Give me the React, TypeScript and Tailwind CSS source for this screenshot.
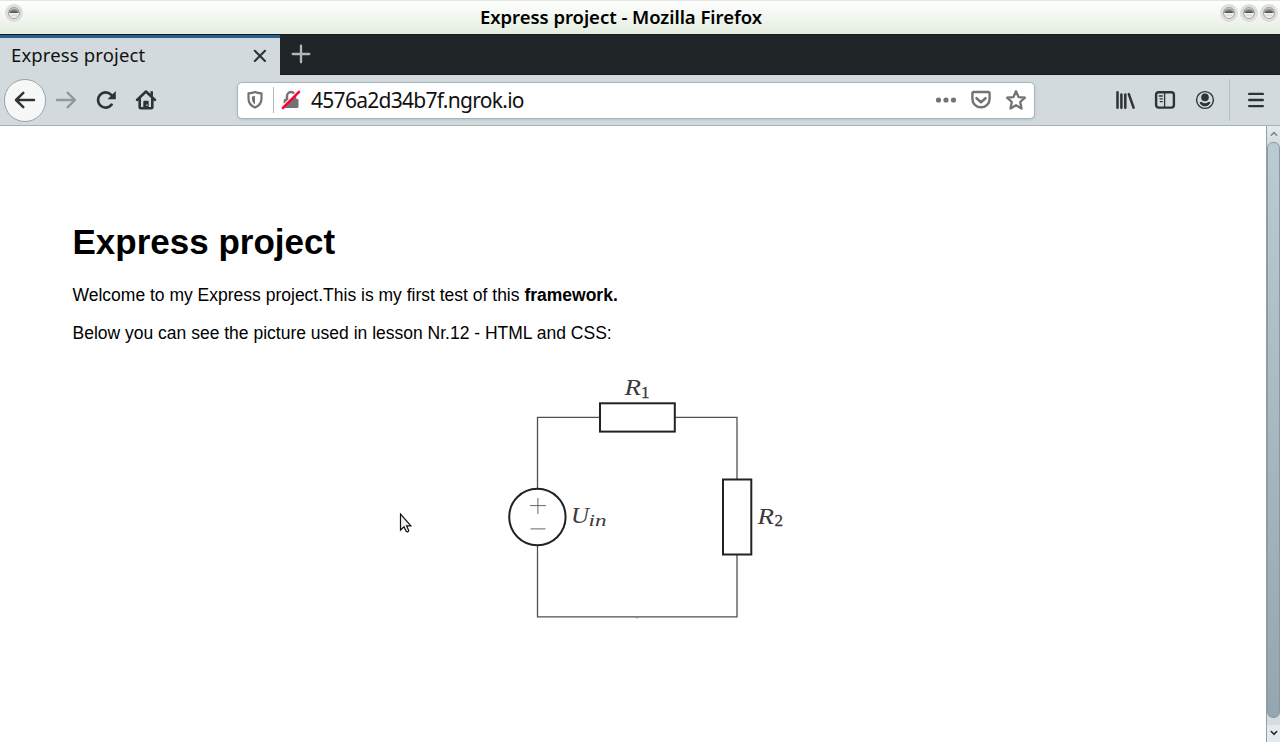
import type { ReactNode } from "react";

type IconProps = { box: string; className: string; children: ReactNode };

function Icon({ box, className, children }: IconProps) {
  return (
    <svg viewBox={box} className={`block shrink-0 ${className}`} fill="none" stroke="currentColor" strokeLinecap="round" strokeLinejoin="round">
      {children}
    </svg>
  );
}

function WindowButton() {
  return (
    <span className="flex h-[18px] w-[18px] items-center justify-center rounded-full bg-[#dcdedb]">
      <span className="flex h-3 w-3 items-center rounded-full border border-[#a2a2a2] bg-[linear-gradient(#c4c4c4_0%,#8a8a8a_20%,#555_45%,#efefef_55%,#dcdcdc_75%,#fff_100%)] shadow-[inset_1px_0_1px_#ffffff80,inset_-1px_0_1px_#ffffff80]" />
    </span>
  );
}

function TitleBar() {
  return (
    <div className="flex h-[34px] shrink-0 items-start justify-between border-t border-[#dfebda] bg-linear-to-b from-white to-[#e4eddf] pr-[2px] pl-[5px]">
      <div className="flex w-[54px] pt-[3px]">
        <WindowButton />
      </div>
      <h1 className="mr-[37px] flex h-[31px] items-center font-['Noto_Sans'] text-[18.5px] font-semibold whitespace-nowrap text-black">
        <span className="tracking-[-0.04px]">Express project - Mozilla Firefox</span>
      </h1>
      <div className="flex gap-[2px] pt-[3px]">
        <WindowButton />
        <WindowButton />
        <WindowButton />
      </div>
    </div>
  );
}

function TabStrip() {
  return (
    <div className="flex h-[41px] shrink-0 border-y border-[#16191b] bg-[#202527]">
      <div className="-mb-px flex w-[280px] items-center justify-between border-t-[3px] border-[#2c6089] bg-[#d2dadd] pr-3 pb-[2px] pl-[11px]">
        <span className="pb-[2px] font-['Noto_Sans'] text-[18.5px] tracking-[0.14px] whitespace-nowrap text-[#111]">Express project</span>
        <Icon box="0 0 16 16" className="h-4 w-4 text-[#2e3436]">
          <path d="M2.8 2.8 13 13M13 2.8 2.8 13" strokeWidth="2.1" />
        </Icon>
      </div>
      <div className="ml-[11px] flex items-center pb-px">
        <Icon box="0 0 20 20" className="h-5 w-5 text-[#b4b7b8]">
          <path d="M10 1.7v16.6M1.7 10h16.6" strokeWidth="2.3" />
        </Icon>
      </div>
    </div>
  );
}

function AddressBar() {
  return (
    <div className="flex h-[37px] w-[798px] items-center rounded-[5px] border border-[#a5b5bd] bg-white text-[#737373] shadow-[0_1px_3px_#0000001c]">
      <Icon box="0 0 18 20" className="ml-2 h-5 w-[18px]">
        <path d="M9 2.1c2 .9 4 1.2 6.5 1.3v5.2c0 4.3-2.2 7.3-6.5 9-4.3-1.7-6.5-4.7-6.5-9V3.4C5 3.3 7 3 9 2.1Z" strokeWidth="2.2" />
        <path d="M9 5.7c-1 .4-2 .6-3.1.7v2.2c0 2.6 1 4.6 3.1 5.8Z" fill="currentColor" stroke="none" />
      </Icon>
      <span className="ml-[9px] h-[26px] w-px bg-[#b3b9bd]" />
      <Icon box="0 0 20 20" className="ml-[7px] h-5 w-5">
        <rect x="2.7" y="8.8" width="14.8" height="9.2" rx="1.5" fill="currentColor" stroke="none" />
        <path d="M6 9V6.1a4 4 0 0 1 8 0V9" strokeWidth="2.5" />
        <path d="M.9 16.7 16.7.9" stroke="#fff" strokeWidth="1.4" />
        <path d="M1.9 18 18 1.9" stroke="#ff0039" strokeWidth="2.5" />
      </Icon>
      <span className="ml-[10px] pt-[2px] font-['Noto_Sans'] text-[21px] tracking-[-0.72px] whitespace-nowrap text-[#111]">4576a2d34b7f.ngrok.io</span>
      <div className="ml-auto flex items-center pr-[7px]">
        <Icon box="0 0 22 20" className="h-5 w-[22px]">
          <g fill="currentColor" stroke="none">
            <circle cx="3.5" cy="10" r="2.6" />
            <circle cx="11" cy="10" r="2.6" />
            <circle cx="18.5" cy="10" r="2.6" />
          </g>
        </Icon>
        <Icon box="0 0 22 20" className="ml-[13px] h-5 w-[22px]">
          <path d="M3.8 2h14.4c.9 0 1.4.5 1.4 1.4v5.3a8.6 8.6 0 0 1-17.2 0V3.4C2.4 2.5 2.9 2 3.8 2Z" strokeWidth="2.4" />
          <path d="m6.5 8.2 4.5 4 4.5-4" strokeWidth="2.5" />
        </Icon>
        <Icon box="0 0 22 22" className="ml-[13px] h-[22px] w-[22px]">
          <path d="m11 2.2 2.6 5.9 6.3.6-4.7 4.3 1.3 6.5-5.5-3.3-5.5 3.3L6.8 13 2.1 8.7l6.3-.6Z" strokeWidth="2.3" />
        </Icon>
      </div>
    </div>
  );
}

function Toolbar() {
  return (
    <div className="flex h-[51px] shrink-0 items-center border-b border-[#a4b1b8] bg-[#d2dadd] text-[#2e3436]">
      <div className="ml-1 flex h-[43px] w-[42px] items-center justify-center rounded-full border border-[#9ba3a6] bg-[#f6f8f8]">
        <Icon box="0 0 22 20" className="h-5 w-[22px]">
          <path d="M20 10H2.5M9.3 2.8 2 10l7.3 7.2" strokeWidth="2.5" />
        </Icon>
      </div>
      <Icon box="0 0 22 20" className="ml-[9px] h-5 w-[22px] text-[#91999c]">
        <path d="M2 10h17.5M12.7 2.8 20 10l-7.3 7.2" strokeWidth="2.4" />
      </Icon>
      <Icon box="0 0 22 20" className="ml-[18px] h-5 w-[22px]">
        <path d="M16.6 14.7A7.6 7.6 0 1 1 16 4.6L18.4 7" strokeWidth="2.7" />
        <path d="M20.8.9v8.300h-8.300Z" fill="currentColor" stroke="none" />
      </Icon>
      <Icon box="0 0 22 22" className="ml-[18px] h-[22px] w-[22px]">
        <path d="M2 11 11 2.5l9 8.5" strokeWidth="2.5" />
        <path d="M4.7 10v8.2c0 .6.4 1 1 1h10.600c.6 0 1-.4 1-1V10" strokeWidth="2.6" />
        <path d="M15.4 2.2h2.600v5.300l-2.600-2Z" fill="currentColor" stroke="none" />
        <path d="M8.3 19v-6.100c0-.7.5-1.200 1.200-1.200h3c.7 0 1.200.5 1.200 1.200V19Z" fill="currentColor" stroke="none" />
        <path d="M12 15.8v.7" stroke="#d2dadd" strokeWidth="1.2" />
      </Icon>
      <div className="ml-20">
        <AddressBar />
      </div>
      <Icon box="0 0 20 20" className="ml-20 h-5 w-5">
        <path d="M2.5 2.2v15.600M6.400 4.600v13.200M10.300 4.600v13.200M13.800 4.100l4.800 13.500" strokeWidth="2.5" />
      </Icon>
      <Icon box="0 0 22 20" className="ml-[19px] h-5 w-[22px]">
        <rect x="2.1" y="2.2" width="17.8" height="15.4" rx="2.6" strokeWidth="2.4" />
        <path d="M10.6 2.5v15" strokeWidth="1.3" />
        <path d="M5.3 6h3M6 8.8h2.300M6.300 11.600h2" strokeWidth="1.3" />
      </Icon>
      <Icon box="0 0 20 20" className="ml-[19px] h-5 w-5">
        <circle cx="10" cy="10" r="8.4" strokeWidth="1.4" />
        <circle cx="10" cy="7.4" r="3.8" fill="currentColor" stroke="none" />
        <path d="M4.6 12.1h2.200c1.800 1.600 4.600 1.600 6.400 0h2.200c-.4 2.600-2.400 4.200-5.400 4.200s-5-1.600-5.400-4.200Z" fill="currentColor" stroke="none" />
      </Icon>
      <span className="ml-[14px] h-[42px] w-px bg-[#b6c0c4]" />
      <Icon box="0 0 20 20" className="ml-4 h-5 w-5">
        <path d="M3.2 3.9h13.600M3.200 10h13.600M3.200 16.100h13.600" strokeWidth="2.4" />
      </Icon>
    </div>
  );
}

function Circuit() {
  return (
    <svg viewBox="490 365 310 265" className="ml-[417.5px] block h-[265px] w-[310px]" fill="none">
      <path d="M537.5 488.5V417.3H599M675 417.3h62V479M737 554.5v62.300H537.500V545" stroke="#505050" strokeWidth="1.3" />
      <rect x="600" y="403.3" width="74.8" height="28.3" stroke="#222" strokeWidth="2" />
      <rect x="723" y="479.5" width="28.3" height="75" stroke="#222" strokeWidth="2" />
      <circle cx="537.4" cy="517" r="28.2" stroke="#222" strokeWidth="2" />
      <path d="M530 505.6h16M537.9 498v16M530.5 528.9h15" stroke="#666" strokeWidth="1" />
      <path d="M636 617.8h2" stroke="#777" strokeWidth=".8" />
      <g fill="#3a3a3a" fontFamily="'Liberation Serif', serif" fontStyle="italic">
        <text x="624.5" y="394.8" fontSize="24" textLength="16.5" lengthAdjust="spacingAndGlyphs">R</text>
        <text x="641" y="397.8" fontSize="17" fontStyle="normal" stroke="#3a3a3a" strokeWidth=".3" textLength="9">1</text>
        <text x="757.5" y="523.5" fontSize="24" textLength="16.5" lengthAdjust="spacingAndGlyphs">R</text>
        <text x="774.5" y="526.3" fontSize="17" fontStyle="normal" stroke="#3a3a3a" strokeWidth=".3" textLength="9">2</text>
        <text x="571" y="523.3" fontSize="24" textLength="18" lengthAdjust="spacingAndGlyphs">U</text>
        <text x="588.5" y="526.3" fontSize="17" textLength="18" lengthAdjust="spacingAndGlyphs">in</text>
      </g>
    </svg>
  );
}

function Scrollbar() {
  return (
    <div className="flex w-[14px] shrink-0 flex-col border-l border-[#8fa0a8] bg-[#d5dde0]">
      <div className="flex h-4 items-center justify-center bg-linear-to-b from-[#e6ecee] to-[#d4dde0] text-[#75858c]">
        <Icon box="0 0 8 6" className="h-[6px] w-2">
          <path d="M1.3 4.3 4 1.5l2.700 2.800" strokeWidth="1.4" />
        </Icon>
      </div>
      <div className="h-[576px] rounded-[6px] border border-[#8799a1] bg-linear-to-b from-[#bccbd1] to-[#95a6af]" />
      <div className="mt-[7px] flex flex-1 items-center justify-center bg-[#e6eaec] pb-px text-[#202527]">
        <Icon box="0 0 8 6" className="h-[6px] w-2">
          <path d="M1.3 1.5 4 4.3l2.700-2.800" strokeWidth="1.6" />
        </Icon>
      </div>
    </div>
  );
}

export default function App() {
  return (
    <div className="relative flex h-[742px] w-[1280px] flex-col overflow-hidden bg-white">
      <TitleBar />
      <TabStrip />
      <Toolbar />
      <div className="flex min-h-0 flex-1">
        <main className="flex-1 pt-24 pl-[72.5px] font-['Liberation_Sans'] text-[17.5px] leading-5 whitespace-nowrap text-black">
          <h2 className="text-[35px] leading-10 font-bold">Express project</h2>
          <p className="mt-[23px]">
            Welcome to my Express project.This is my first test of this <strong>framework.</strong>
          </p>
          <p className="mt-[18px] mb-[22px]">Below you can see the picture used in lesson Nr.12 - HTML and CSS:</p>
          <Circuit />
        </main>
        <Scrollbar />
      </div>
      <svg viewBox="0 0 14 21" className="absolute top-[513px] left-[399px] h-[21px] w-[14px]">
        <path d="M1.5 1v16l3.500-3.300 2.300 4.800c1 .8 2.600 0 2.300-1.300l-2-4.400h4.300Z" fill="#f2f2f2" stroke="#111" strokeWidth="1.2" />
      </svg>
    </div>
  );
}
